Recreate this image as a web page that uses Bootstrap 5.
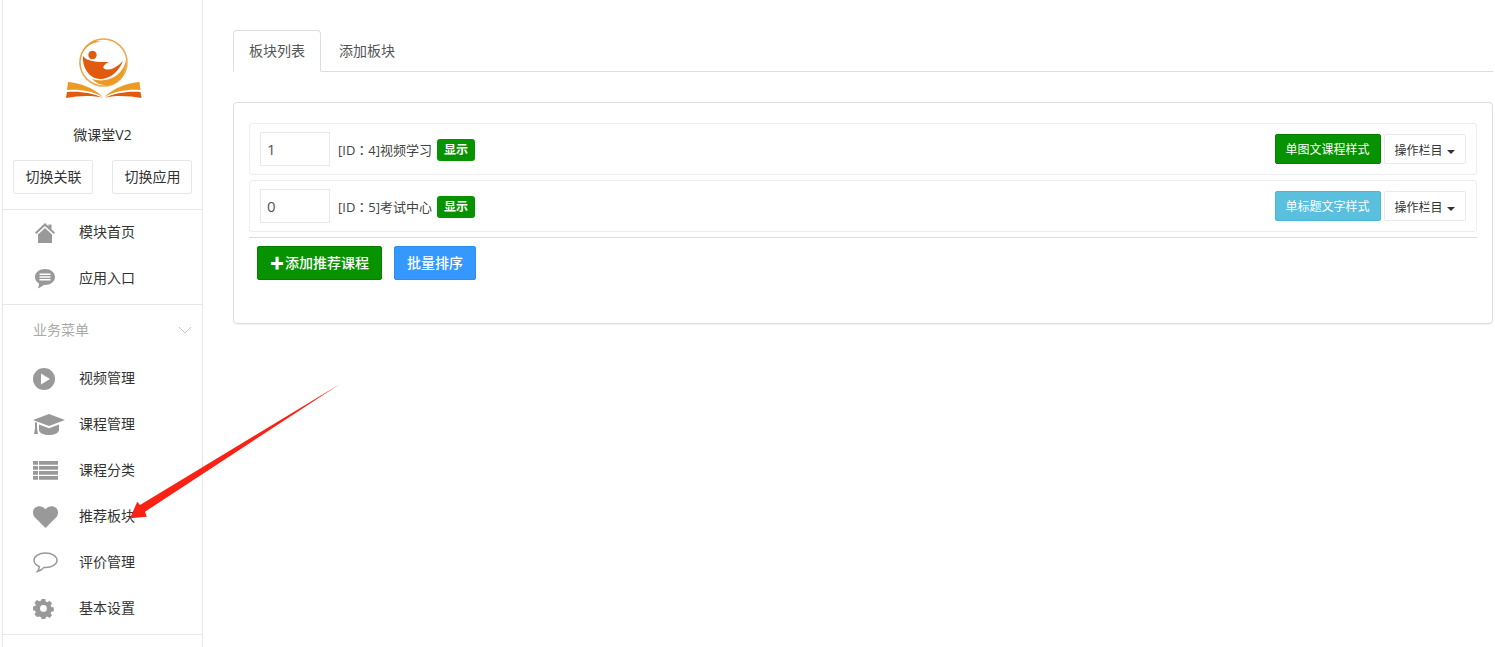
<!DOCTYPE html>
<html lang="zh"><head><meta charset="utf-8"><title>推荐板块</title>
<link rel="stylesheet" href="https://cdn.jsdelivr.net/npm/bootstrap@5.3.0/dist/css/bootstrap.min.css">
<style>
html,body{height:647px;overflow:hidden}
body{font-family:"Open Sans","Noto Sans CJK SC",sans-serif;font-size:14px;color:#333;background:#fff;position:relative}
.shell{height:647px;padding-left:2px}
.side{width:201px;flex:none;border-left:1px solid #e7e7eb;border-right:1px solid #e7e7eb;height:647px}
.brand{height:210px;padding-top:38px;border-bottom:1px solid #e7e7eb}
.brand svg{display:block;margin:0 auto 0 62px}
.brand-name{margin-top:26px;line-height:20px;text-align:center;font-size:14px}
.swbtn{width:80px;height:34px;font-size:14px;line-height:30px;padding:0 0 0 1px;color:#333;border:1px solid #e7e7eb;border-radius:2px;background:#fff}
.swrow{margin-top:15px;padding:0 10px}
.menu-sec{border-bottom:1px solid #e7e7eb}
.mi{height:46px;display:flex;align-items:center;color:#333;text-decoration:none;font-size:14px;padding-bottom:4px}
.mi .ic{width:76px;flex:none;display:flex;padding-left:30px;margin-top:3px}
.ic svg{fill:#999;display:block}
.ic .ind2{margin-left:2px}
.sec-title{height:49px;color:#aaa;padding:0 10px 0 30px;margin-bottom:2px}
.main{flex:1;padding:30px 2px 0 30px;min-width:0}
.tabs{--bs-nav-tabs-border-color:#ddd;border-bottom:1px solid #ddd;height:42px}
.tabs .nav-link{height:42px;padding:0 15px;line-height:40px;font-size:14px;color:#555;border-radius:4px 4px 0 0;border:1px solid transparent}
.tabs .nav-item+.nav-item .nav-link{padding-left:17px}
.tabs .nav-link.active{color:#555;border-color:#ddd #ddd #fff;background:#fff}
.panel-box{margin-top:30px;height:222px;border:1px solid #ddd;border-radius:4px;padding:20px 15px 0;box-shadow:0 1px 1px rgba(0,0,0,.05)}
.rowbox{height:52px;border:1px solid #eee;border-radius:3px;padding:0 10px;margin-bottom:5px}
.ord{width:70px;height:34px;border:1px solid #e7e7eb;border-radius:0;padding:0 0 1px 6px;font-size:15px;color:#555;box-shadow:none}
.ttl{font-size:13px;margin-left:8px;color:#444;margin-top:2px;width:94px;white-space:nowrap}
.cl{font-family:"Noto Sans CJK TC",sans-serif}
.tag-on{background:#079200;font-size:12px;width:38px;height:22px;line-height:22px;padding:0;margin-left:5px;margin-top:2px;border-radius:3px;font-weight:700}
.bk{height:30px;padding:1px 1px 0 0;font-size:12px;line-height:28px;border-radius:2px}
.bk-g{width:106px;background:#079200;border:1px solid #067f00;color:#fff}
.bk-i{width:106px;background:#5bc0de;border:1px solid #46b8da;color:#fff}
.bk-w{width:82px;margin-left:3px;background:#fff;border:1px solid #eaeaea;color:#333;padding-top:2px}
.bk-w.dropdown-toggle::after{border-top-width:4px;border-right-width:4px;border-left-width:4px;margin-left:4px;vertical-align:.1em}
.rule{border-top:1px solid #ddd;margin-bottom:8px}
.act{height:34px;padding:0;font-size:14px;line-height:32px;border-radius:2px;font-weight:500}
.plus{margin-right:1px}
.act-g{width:125px;background:#079200;border:1px solid #067f00;color:#fff;margin-left:8px}
.act-b{width:82px;background:#3498ff;border:1px solid #2d8ef0;color:#fff;margin-left:12px}
.arrow{position:absolute;left:120px;top:375px;pointer-events:none}
</style></head>
<body>
<div class="shell d-flex">
<aside class="side">
 <div class="brand">
  <svg width="78" height="61" viewBox="0 0 78 61">
   <circle cx="38.500" cy="24.500" r="23.500" fill="none" stroke="#f0a84a" stroke-width="1.500"/>
   <path d="M30 3A22 22 0 0 0 19 37 18 18 0 0 1 15.500 20 20 20 0 0 1 37 4Z" fill="#ec8f1e"/>
   <path d="M18 18C22 24 33 24 44 24 38 27 37 30 40 31 46 33 52 29 58 23 54 33 46 41 35 41 25 41 17 30 18 18Z" fill="#e25a10"/>
   <circle cx="27.500" cy="17" r="4.200" fill="#e25a10"/>
   <path d="M61 22C59 33 50 41 40 42 35 43 31 42 27 41 32 46 38 48 44 47 55 46 62 34 61 22Z" fill="#ec9a22"/>
   <path d="M3 44C15 45 29 50 38 59 28 53 14 51 2 52Z" fill="#ec9a22"/>
   <path d="M74.500 44C62.500 45 48.500 50 39.500 59 49.500 53 63.500 51 75.500 52Z" fill="#ec9a22"/>
   <path d="M2 54C15 53 28 55 38 60 28 57 13 58 1 60Z" fill="#e25a10"/>
   <path d="M75.500 54C62.500 53 49.500 55 39.500 60 49.500 57 64.500 58 76.500 60Z" fill="#e25a10"/>
  </svg>
  <div class="brand-name">微课堂V2</div>
  <div class="swrow d-flex justify-content-between">
   <button class="btn swbtn">切换关联</button><button class="btn swbtn">切换应用</button>
  </div>
 </div>
 <div class="menu-sec" style="height:95px">
  <a class="mi" href="#"><span class="ic"><svg class="ind2" width="20" height="20" viewBox="0 0 20 20"><path d="M10 0 0 9.500 1.300 11 10 3 18.700 11 20 9.500 16.500 6.200V1.500h-3v1.800ZM3 11.500V20h14v-8.500L10 5Z"/></svg></span>模块首页</a>
  <a class="mi" href="#"><span class="ic"><svg class="ind2" width="20" height="20" viewBox="0 0 20 20"><path fill-rule="evenodd" d="M10 0C4.500 0 0 3.500 0 8c0 2.700 1.600 5 4 6.500 0 1.500-.6 3.500-1 4.700 2-.6 4.500-2.300 5.800-3.300.4 0 .8.100 1.200.1 5.500 0 10-3.500 10-8S15.500 0 10 0ZM4.500 4.600h11v1.500h-11ZM4.500 7.300h11v1.500h-11ZM4.500 10h11v1.500h-11Z"/></svg></span>应用入口</a>
 </div>
 <div class="menu-sec" style="height:330px">
  <div class="sec-title d-flex align-items-center justify-content-between"><span>业务菜单</span><svg width="14" height="8" viewBox="0 0 14 8"><path d="M1 1l6 6 6-6" fill="none" stroke="#bcc6d2" stroke-width="1"/></svg></div>
  <a class="mi" href="#"><span class="ic"><svg width="22" height="22" viewBox="0 0 22 22"><path fill-rule="evenodd" d="M11 0a11 11 0 1 0 0 22 11 11 0 0 0 0-22ZM8 5.500 17 11 8 16.500Z"/></svg></span>视频管理</a>
  <a class="mi" href="#"><span class="ic"><svg width="32" height="22" viewBox="0 0 32 22"><path d="M16 0 0 6l16 6 16-6ZM6 10.500V16c0 3 5 5 10 5s10-2 10-5v-5.500l-10 3.800ZM2 8v6.500l-1 5.500h4l-1-5.500V8.800Z"/></svg></span>课程管理</a>
  <a class="mi" href="#"><span class="ic"><svg width="25" height="19" viewBox="0 0 25 19"><path d="M0 0h5v3.800H0ZM6 0h19v3.800H6ZM0 5h5v3.800H0ZM6 5h19v3.800H6ZM0 10h5v3.800H0ZM6 10h19v3.800H6ZM0 15h5v3.800H0ZM6 15h19v3.800H6Z"/></svg></span>课程分类</a>
  <a class="mi" href="#"><span class="ic"><svg width="25" height="22" viewBox="0 0 25 22"><path d="M12.500 22 2 11.500C-.7 8.600-.6 4 2 1.800 4.800-.7 9.600-.5 12.500 3.200 15.400-.5 20.200-.7 23 1.800c2.600 2.200 2.700 6.800 0 9.700Z"/></svg></span>推荐板块</a>
  <a class="mi" href="#"><span class="ic"><svg width="25" height="21" viewBox="0 0 25 21"><path d="M12.500 1C6 1 1 4.200 1 8.300c0 2.700 2.200 5 5.400 6.300-.2 1.800-1 3.700-2 4.900 2.800-.6 5.200-2.400 6.500-4.100.5 0 1 .1 1.600.1 6.400 0 11.500-3.200 11.500-7.200S18.900 1 12.500 1Z" fill="none" stroke="#999" stroke-width="1.500" style="fill:none"/></svg></span>评价管理</a>
  <a class="mi" href="#"><span class="ic"><svg width="21" height="21" viewBox="0 0 21 21"><path fill-rule="evenodd" d="M8.500 0h4l.6 2.800 1.700.7 2.400-1.500 2.800 2.800-1.500 2.400.7 1.700 2.800.6v4l-2.800.6-.7 1.700 1.500 2.400-2.800 2.800-2.400-1.500-1.700.7-.6 2.800h-4l-.6-2.800-1.700-.7L3.300 20 .5 17.200 2 14.800l-.7-1.700L-1.500 12.500v-4l2.800-.6.7-1.700L.5 3.800 3.300 1l2.400 1.500 2.200-.7ZM10.500 6.700a3.800 3.800 0 1 0 0 7.600 3.800 3.800 0 0 0 0-7.600Z" transform="translate(1 1) scale(.9)"/></svg></span>基本设置</a>
 </div>
</aside>
<main class="main">
 <ul class="nav nav-tabs tabs">
  <li class="nav-item"><a class="nav-link active" href="#">板块列表</a></li>
  <li class="nav-item"><a class="nav-link" href="#">添加板块</a></li>
 </ul>
 <div class="panel-box">
  <div class="rowbox d-flex align-items-center">
   <input class="form-control ord" value="1"><span class="ttl">[ID<span class="cl" lang="zh-Hant-TW">：</span>4]视频学习</span><span class="badge tag-on">显示</span>
   <span class="ms-auto d-flex"><button class="btn bk bk-g">单图文课程样式</button><button class="btn bk bk-w dropdown-toggle">操作栏目</button></span>
  </div>
  <div class="rowbox d-flex align-items-center">
   <input class="form-control ord" value="0"><span class="ttl">[ID<span class="cl" lang="zh-Hant-TW">：</span>5]考试中心</span><span class="badge tag-on">显示</span>
   <span class="ms-auto d-flex"><button class="btn bk bk-i">单标题文字样式</button><button class="btn bk bk-w dropdown-toggle">操作栏目</button></span>
  </div>
  <div class="rule"></div>
  <div class="d-flex">
   <button class="btn act act-g"><span class="plus">✚</span>添加推荐课程</button><button class="btn act act-b">批量排序</button>
  </div>
 </div>
</main>
</div>
<svg class="arrow" width="225" height="150" viewBox="0 0 225 150"><path d="M220 9 20 130 17.300 126.700 10 143.300 26.700 141.700 25 136.700Z" fill="#fb2114"/></svg>
</body></html>
